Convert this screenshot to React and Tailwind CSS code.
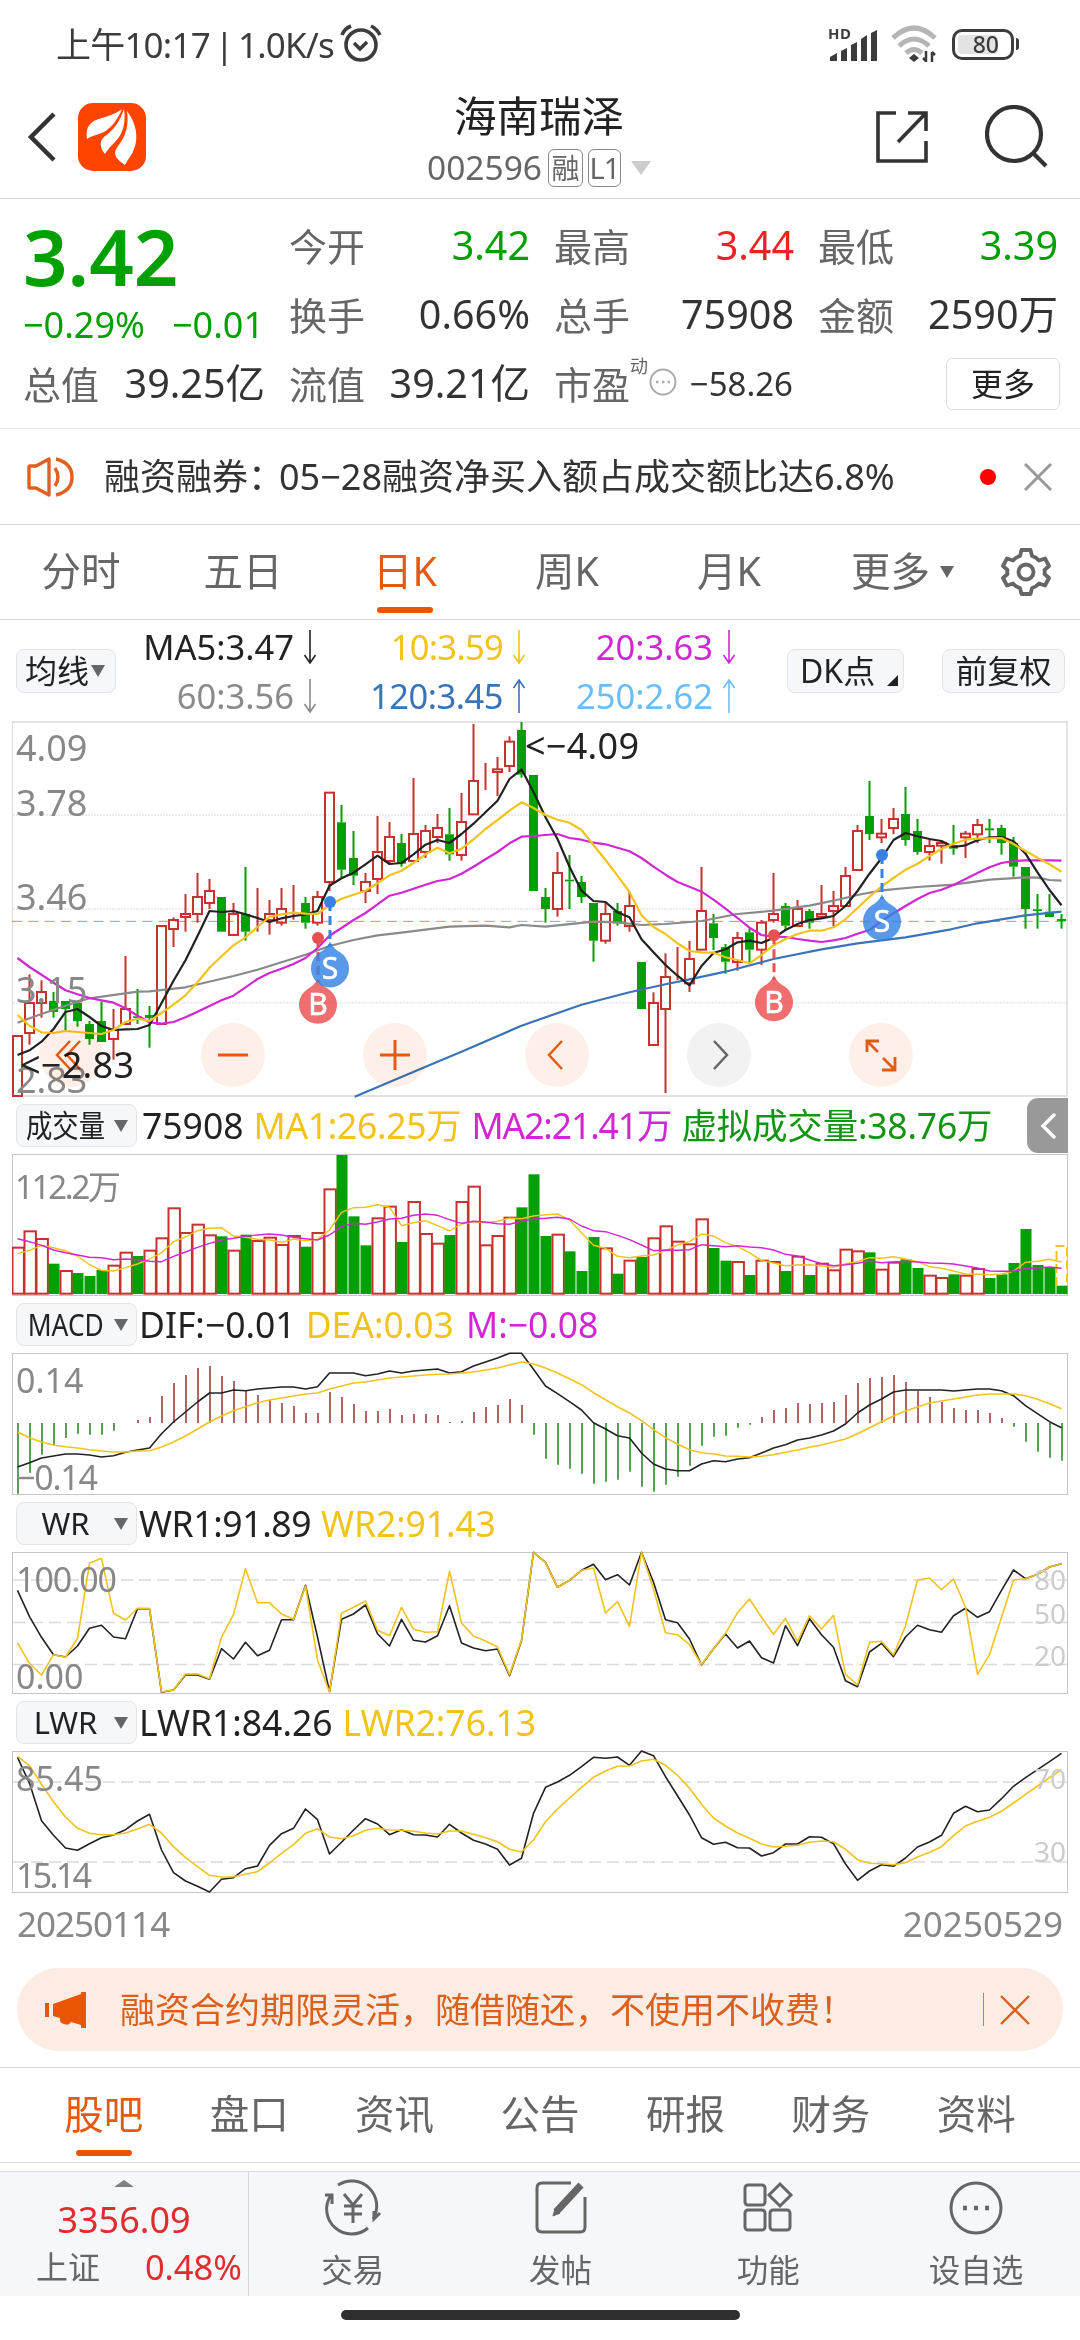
const RED = "#c8312f"
const GREEN = "#00a000"
const BLACK = "#222222"
const YELLOW = "#f2c31b"
const PURPLE = "#d226d2"

// [rising, high, body top, body bottom, low], three units per pixel
const candles = [
  [1, 978, 978, 1158, 1158], [1, 793, 879, 969, 1004], [1, 811, 846, 879, 923], [0, 846, 873, 906, 923],
  [0, 873, 873, 897, 960], [0, 873, 878, 933, 950], [0, 933, 942, 987, 1004], [0, 875, 933, 996, 996],
  [1, 897, 960, 987, 1049], [1, 738, 897, 942, 942], [0, 837, 919, 924, 942], [0, 888, 915, 924, 1013],
  [1, 648, 648, 942, 942], [1, 622, 630, 657, 711], [1, 552, 612, 621, 665], [1, 489, 561, 612, 638],
  [1, 507, 543, 579, 597], [0, 561, 561, 665, 665], [1, 579, 612, 675, 675], [0, 471, 612, 665, 692],
  [1, 534, 612, 612, 665], [1, 570, 612, 630, 674], [1, 534, 597, 638, 647], [1, 525, 588, 588, 629],
  [0, 561, 579, 638, 656], [1, 543, 561, 638, 647], [1, 248, 248, 516, 543], [0, 285, 337, 479, 505],
  [0, 363, 444, 497, 525], [1, 489, 516, 543, 579], [1, 318, 426, 507, 552], [1, 336, 381, 453, 461],
  [0, 372, 399, 461, 470], [1, 204, 372, 453, 455], [1, 345, 363, 426, 444], [1, 312, 354, 381, 399],
  [0, 294, 373, 433, 452], [1, 249, 336, 435, 452], [1, 42, 213, 313, 313], [1, 159, 195, 195, 240],
  [1, 141, 178, 186, 258], [1, 79, 95, 168, 186], [0, 36, 60, 194, 203], [0, 195, 195, 543, 543],
  [0, 534, 561, 597, 638], [1, 426, 489, 597, 620], [0, 435, 509, 514, 597], [0, 498, 516, 561, 579],
  [0, 579, 579, 692, 755], [1, 579, 612, 692, 701], [0, 579, 603, 640, 647], [1, 545, 588, 648, 665],
  [0, 756, 756, 897, 897], [1, 847, 879, 1005, 1005], [1, 730, 801, 897, 1149], [1, 711, 792, 792, 810],
  [1, 693, 747, 820, 846], [1, 471, 603, 719, 719], [0, 612, 640, 684, 720], [0, 702, 711, 755, 791],
  [1, 666, 684, 756, 782], [0, 656, 667, 719, 760], [1, 630, 638, 719, 765], [1, 489, 612, 630, 638],
  [0, 579, 588, 647, 662], [1, 570, 597, 648, 648], [0, 597, 603, 638, 656], [1, 525, 612, 620, 626],
  [1, 543, 588, 603, 648], [1, 471, 498, 588, 588], [1, 345, 363, 480, 480], [0, 213, 318, 372, 390],
  [1, 327, 371, 382, 399], [1, 294, 327, 354, 372], [0, 231, 312, 390, 407], [0, 327, 363, 426, 434],
  [1, 390, 408, 426, 452], [1, 393, 399, 407, 461], [0, 345, 405, 416, 434], [1, 363, 371, 382, 444],
  [1, 327, 345, 373, 399], [0, 327, 355, 361, 399], [0, 345, 354, 399, 434], [0, 381, 399, 470, 500],
  [0, 471, 471, 597, 656], [0, 552, 598, 603, 656], [0, 552, 605, 621, 621], [0, 612, 627, 633, 656],
]

const ma5 = [1035, 1021, 995, 957, 906, 897, 921, 948, 960, 958, 957, 945, 880, 812, 751, 678, 603, 606, 603, 613, 624, 636, 625, 618, 613, 603, 527, 505, 488, 463, 437, 462, 459, 433, 404, 390, 399, 372, 341, 307, 272, 207, 178, 246, 322, 387, 470, 542, 573, 576, 607, 622, 688, 727, 765, 797, 826, 768, 729, 718, 697, 692, 699, 684, 660, 642, 630, 625, 618, 588, 543, 491, 445, 390, 369, 379, 387, 393, 411, 406, 391, 382, 381, 394, 431, 487, 540, 586]
const ma10 = [915, 947, 967, 969, 963, 966, 969, 972, 960, 936, 926, 933, 909, 884, 856, 817, 773, 739, 706, 682, 651, 621, 613, 608, 611, 612, 585, 566, 554, 542, 520, 496, 482, 459, 433, 413, 430, 416, 388, 357, 330, 302, 277, 294, 315, 329, 338, 360, 405, 450, 497, 546, 616, 651, 672, 700, 723, 727, 728, 742, 750, 760, 735, 706, 687, 672, 662, 662, 652, 628, 594, 560, 530, 504, 479, 461, 438, 417, 401, 389, 386, 385, 384, 402, 423, 443, 463, 485]
const ma20 = [744, 771, 794, 818, 841, 853, 864, 871, 878, 895, 917, 937, 941, 936, 922, 905, 888, 871, 857, 832, 807, 789, 776, 762, 744, 714, 677, 654, 630, 609, 583, 557, 548, 536, 524, 513, 507, 491, 470, 448, 426, 400, 380, 378, 375, 372, 384, 389, 398, 403, 413, 424, 444, 470, 494, 516, 530, 545, 569, 596, 624, 653, 675, 680, 681, 687, 692, 696, 691, 684, 671, 660, 633, 610, 588, 567, 549, 539, 525, 507, 489, 472, 459, 453, 451, 451, 451, 452]
// the long averages are smooth, so they are kept as [index, value]
const ma60 = [[0, 938], [2, 912], [4, 887], [6, 865], [10, 845], [11, 844], [14, 832], [18, 798], [20, 779], [24, 734], [26, 708], [28, 690], [30, 676], [32, 668], [36, 650], [39, 647], [41, 652], [42, 645], [44, 650], [48, 635], [50, 637], [52, 645], [54, 642], [57, 633], [60, 612], [63, 602], [66, 587], [68, 572], [70, 555], [72, 541], [75, 531], [78, 524], [81, 509], [84, 502], [85, 503], [86, 510], [87, 512]]
const ma120 = [[28.1, 1160], [35, 1055], [37, 1025], [42, 947], [47, 884], [51, 847], [54, 823], [56, 808], [59, 785], [63, 747], [67, 718], [70, 700], [74, 682], [77.8, 658], [80, 640], [84, 616], [87, 605]]

const volumeTops = [473, 424, 447, 521, 543, 549, 558, 540, 527, 488, 498, 482, 445, 355, 429, 404, 436, 439, 482, 434, 453, 443, 465, 438, 470, 429, 298, 195, 379, 466, 385, 350, 456, 336, 432, 461, 435, 336, 290, 466, 438, 383, 352, 253, 438, 434, 484, 543, 441, 475, 551, 512, 501, 445, 409, 455, 463, 388, 474, 512, 516, 555, 512, 516, 543, 500, 555, 521, 541, 479, 484, 487, 539, 518, 508, 534, 557, 564, 553, 557, 537, 564, 553, 519, 417, 525, 532, 587]
const fallingVolume = [3, 5, 6, 7, 10, 17, 19, 24, 27, 28, 29, 32, 36, 42, 43, 44, 46, 47, 48, 50, 52, 58, 59, 61, 64, 66, 71, 74, 75, 78, 81, 82, 83, 84, 85, 86, 87]
const volumeMa1 = [491, 481, 466, 473, 482, 498, 524, 541, 543, 533, 522, 507, 488, 455, 441, 422, 415, 413, 438, 442, 448, 450, 457, 447, 452, 448, 420, 367, 353, 352, 344, 352, 407, 398, 392, 407, 423, 402, 395, 398, 394, 385, 386, 378, 374, 372, 390, 428, 466, 475, 499, 503, 498, 495, 482, 465, 455, 432, 438, 458, 470, 488, 512, 519, 527, 525, 524, 528, 532, 521, 515, 503, 505, 500, 507, 515, 530, 535, 543, 552, 553, 554, 552, 544, 517, 514, 508, 516]
const volumeMa2 = [446, 455, 466, 480, 488, 495, 502, 503, 509, 507, 509, 514, 515, 499, 486, 472, 460, 450, 445, 439, 435, 432, 435, 442, 446, 450, 435, 410, 400, 403, 396, 387, 385, 376, 372, 376, 389, 400, 394, 396, 401, 403, 394, 387, 385, 382, 387, 408, 422, 425, 436, 449, 465, 482, 480, 481, 479, 464, 467, 470, 467, 471, 473, 480, 493, 498, 510, 521, 527, 524, 520, 513, 518, 516, 514, 516, 519, 520, 522, 528, 534, 543, 544, 544, 536, 534, 531, 535]

const macdBars = [1211, 1148, 1094, 1066, 1044, 1031, 1034, 1034, 1022, 999, 990, 981, 918, 879, 855, 834, 828, 858, 873, 903, 915, 930, 939, 948, 969, 969, 906, 921, 942, 963, 963, 957, 975, 972, 972, 975, 996, 993, 966, 951, 945, 927, 945, 1034, 1106, 1124, 1136, 1151, 1181, 1175, 1169, 1145, 1190, 1205, 1184, 1160, 1127, 1067, 1040, 1037, 1013, 1004, 981, 960, 954, 939, 942, 939, 936, 915, 879, 864, 861, 855, 876, 903, 921, 936, 954, 960, 960, 969, 984, 1010, 1055, 1085, 1103, 1112]
const dif = [1131, 1118, 1104, 1098, 1092, 1092, 1095, 1101, 1097, 1087, 1080, 1074, 1031, 996, 966, 936, 909, 909, 900, 902, 897, 894, 891, 891, 897, 890, 849, 849, 849, 857, 852, 843, 849, 843, 840, 837, 849, 845, 828, 816, 804, 790, 790, 838, 888, 911, 935, 960, 998, 1017, 1037, 1044, 1089, 1122, 1137, 1142, 1142, 1122, 1112, 1115, 1107, 1103, 1089, 1074, 1064, 1050, 1044, 1035, 1023, 1002, 969, 945, 927, 906, 900, 900, 900, 900, 903, 900, 897, 897, 902, 917, 947, 971, 995, 1013]
const dea = [1026, 1043, 1056, 1065, 1070, 1074, 1079, 1083, 1086, 1086, 1083, 1082, 1071, 1056, 1038, 1017, 996, 978, 962, 950, 938, 930, 924, 918, 912, 909, 897, 888, 879, 876, 870, 864, 861, 858, 855, 853, 852, 849, 846, 840, 834, 825, 816, 822, 834, 849, 866, 884, 908, 929, 950, 969, 992, 1019, 1043, 1062, 1079, 1088, 1092, 1098, 1099, 1101, 1099, 1094, 1087, 1080, 1072, 1065, 1056, 1047, 1031, 1013, 995, 978, 963, 951, 939, 933, 927, 921, 915, 912, 912, 912, 917, 928, 941, 956]

const wr1 = [271, 350, 412, 464, 471, 438, 385, 376, 411, 416, 326, 326, 577, 570, 525, 525, 538, 446, 477, 427, 467, 451, 359, 359, 256, 411, 575, 358, 342, 315, 401, 438, 358, 421, 426, 407, 317, 429, 444, 452, 447, 527, 422, 157, 187, 262, 241, 211, 193, 239, 224, 255, 157, 247, 359, 368, 417, 495, 446, 402, 444, 423, 473, 489, 377, 437, 356, 404, 442, 542, 560, 456, 430, 470, 411, 376, 389, 397, 347, 325, 352, 335, 271, 210, 236, 223, 201, 191]
const wr2 = [429, 490, 525, 464, 472, 415, 190, 175, 340, 360, 325, 325, 576, 570, 522, 522, 536, 412, 343, 206, 308, 308, 342, 358, 258, 480, 577, 340, 322, 303, 391, 407, 322, 388, 397, 395, 214, 369, 408, 423, 441, 524, 420, 157, 187, 262, 241, 211, 204, 339, 305, 379, 157, 267, 398, 404, 434, 494, 446, 400, 338, 297, 352, 403, 355, 425, 347, 387, 346, 523, 555, 427, 424, 465, 377, 240, 234, 269, 237, 321, 523, 464, 352, 240, 236, 223, 201, 191]

const lwr1 = [772, 850, 962, 1006, 1044, 1051, 1031, 1013, 1005, 989, 963, 943, 1050, 1118, 1143, 1159, 1176, 1138, 1133, 1106, 1098, 1036, 1001, 985, 927, 959, 1062, 1027, 990, 956, 972, 1004, 989, 1004, 1005, 1011, 973, 999, 1021, 1032, 1048, 1095, 1075, 940, 862, 846, 826, 800, 772, 775, 771, 796, 753, 767, 830, 887, 945, 1013, 1033, 1027, 1043, 1044, 1068, 1058, 1032, 1032, 1010, 1012, 1031, 1092, 1141, 1113, 1094, 1099, 1074, 1041, 1026, 1006, 940, 919, 935, 930, 896, 859, 833, 809, 785, 760]
const lwr2 = [769, 797, 853, 905, 951, 985, 1000, 1004, 1004, 999, 987, 973, 999, 1040, 1073, 1100, 1126, 1131, 1130, 1123, 1115, 1089, 1060, 1034, 1000, 986, 1011, 1016, 1007, 991, 985, 990, 991, 994, 999, 1002, 993, 993, 1003, 1013, 1025, 1048, 1056, 1020, 965, 927, 894, 862, 832, 813, 799, 798, 783, 778, 796, 826, 865, 913, 954, 978, 999, 1015, 1032, 1041, 1039, 1036, 1027, 1023, 1025, 1048, 1079, 1090, 1091, 1094, 1088, 1071, 1057, 1040, 1007, 978, 964, 952, 934, 909, 883, 858, 833, 809]

const xAt = (i) => 17.5 + i * 12

function Line({ data, top, color, width = 1.6 }) {
  const points = data
    .map((v, i) => (Array.isArray(v) ? [xAt(v[0]), (v[1] - top) / 3] : [xAt(i), (v - top) / 3]))
    .map(([x, y]) => `${x.toFixed(1)},${y.toFixed(1)}`)
    .join(" ")
  return <polyline points={points} fill="none" stroke={color} strokeWidth={width} strokeLinejoin="round" />
}

function Label({ x = 16, y, children, ...rest }) {
  return (
    <text x={x} y={y} fontSize="34" fill="#888888" {...rest}>
      {children}
    </text>
  )
}

function Pin({ x, dotY, y, letter, color }) {
  return (
    <g>
      <line x1={x} x2={x} y1={dotY} y2={y - 22} stroke={color} strokeWidth="3" strokeDasharray="9 5" />
      <circle cx={x} cy={dotY} r="6" fill={color} />
      <path
        d={`M${x} ${y - 27} C${x + 3} ${y - 20} ${x + 7} ${y - 18} ${x + 10} ${y - 16} A19 19 0 1 1 ${x - 10} ${y - 16} C${x - 7} ${y - 18} ${x - 3} ${y - 20} ${x} ${y - 27}Z`}
        fill={color}
        opacity="0.82"
      />
      <text x={x} y={y + 10.5} fontSize="30" fill="white" stroke="white" strokeWidth="0.6" textAnchor="middle">
        {letter}
      </text>
    </g>
  )
}

function CandleChart() {
  const y = (v) => (v - 33) / 3
  return (
    <svg width="1080" height="376" className="block overflow-visible">
      {[315, 597, 878].map((v) => (
        <line key={v} x1="13" x2="1067" y1={y(v)} y2={y(v)} stroke="#ececec" strokeWidth="2" strokeDasharray="2 1" />
      ))}
      <path d="M12 1H1067V375H12" fill="none" stroke="#e2e2e2" strokeWidth="2" />
      <path d="M12.5 0V376" stroke="#dddddd" />
      <line x1="12" x2="1067" y1={y(634)} y2={y(634)} stroke="#dc8d55" strokeWidth="1" strokeDasharray="10 6.3" />
      {candles.map(([up, high, top, bottom, low], i) => {
        const x = xAt(i)
        const color = up ? RED : GREEN
        return (
          <g key={i} fill={color} stroke="none">
            {high < top && <rect x={x - 1} y={y(high)} width="2" height={(top - high) / 3} />}
            {low > bottom && <rect x={x - 1} y={y(bottom)} width="2" height={(low - bottom) / 3} />}
            {up ? (
              <rect x={x - 4.5} y={y(top)} width="9" height={(bottom - top) / 3} fill="none" stroke={color} strokeWidth="2" />
            ) : (
              <rect x={x - 4.5} y={y(top)} width="9" height={(bottom - top) / 3} />
            )}
          </g>
        )
      })}
      <Line data={ma120} top={33} color="#3a74b8" width={2.2} />
      <Line data={ma60} top={33} color="#8a8a8a" width={2.2} />
      <Line data={ma20} top={33} color={PURPLE} width={2.2} />
      <Line data={ma5} top={33} color={BLACK} width={2.2} />
      <Line data={ma10} top={33} color={YELLOW} width={2.2} />
      <Label y={y(153)} fontSize="36">4.09</Label>
      <Label y={y(318)} fontSize="36">3.78</Label>
      <Label y={y(600)} fontSize="36">3.46</Label>
      <Label y={y(878)} fontSize="36">3.15</Label>
      <Label y={y(1148)} fontSize="36">2.83</Label>
      <Label x={525} y={y(146)} fontSize="36" fill={BLACK} textLength="114">{"<−4.09"}</Label>
      <Label x={20} y={y(1103)} fontSize="36" fill={BLACK} textLength="114">{"<−2.83"}</Label>
      <Pin x={318} dotY={y(684)} y={y(884)} letter="B" color="#ec4f50" />
      <Pin x={330} dotY={y(576)} y={y(775)} letter="S" color="#3482e4" />
      <Pin x={774} dotY={y(676)} y={y(876)} letter="B" color="#ec4f50" />
      <Pin x={882} dotY={y(435)} y={y(634)} letter="S" color="#3482e4" />
    </svg>
  )
}

const controls = [
  { name: "first", d: "M31 18L18 32L31 46M41 18L28 32L41 46" },
  { name: "zoom out", d: "M17 32H47", strokeWidth: 3 },
  { name: "zoom in", d: "M17 32H47M32 17V47", strokeWidth: 3 },
  { name: "previous", d: "M37 18L24 32L37 46" },
  { name: "next", d: "M27 18L40 32L27 46", muted: true },
  { name: "expand", d: "M18 29V18H30M18 18L29 29M34 35L46 47M46 34V47H33", strokeWidth: 2.8 },
]

function ChartControls() {
  return (
    <div className="absolute left-[39px] top-[302px] flex gap-[98px] mix-blend-multiply">
      {controls.map(({ name, d, muted, strokeWidth = 2.5 }) => (
        <button
          key={name}
          aria-label={name}
          className={`size-16 rounded-full ${muted ? "bg-[#f2f2f2] text-[#666]" : "bg-[#fef0e9] text-[#e45a12]"}`}
        >
          <svg width="64" height="64" fill="none" stroke="currentColor" strokeWidth={strokeWidth}>
            <path d={d} />
          </svg>
        </button>
      ))}
    </div>
  )
}

function Frame({ guides = [], children }) {
  return (
    <svg width="1080" height="142" className="block overflow-visible">
      {guides.map((gy) => (
        <line key={gy} x1="13" x2="1067" y1={gy} y2={gy} stroke="#dadada" strokeWidth="1.4" strokeDasharray="12 6" />
      ))}
      <rect x="12.5" y="0.5" width="1055" height="141" fill="none" stroke="#c6c6c6" />
      {children}
    </svg>
  )
}

function VolumeChart() {
  const y = (v) => (v - 192) / 3
  return (
    <Frame>
      <defs>
        <clipPath id="volume">
          <rect x="12" width="1056" height="142" />
        </clipPath>
      </defs>
      <g clipPath="url(#volume)">
        {volumeTops.map((top, i) =>
          fallingVolume.includes(i) ? (
            <rect key={i} x={xAt(i) - 5} y={y(top)} width="11" height={y(612) - y(top)} fill={GREEN} />
          ) : (
            <rect key={i} x={xAt(i) - 5} y={y(top)} width="11.4" height={y(611) - y(top)} fill="white" stroke={RED} strokeWidth="2" />
          )
        )}
        <path d="M1056.5 132V92H1067V132" fill="none" stroke={YELLOW} strokeWidth="2" strokeDasharray="9 4" />
      </g>
      <Line data={volumeMa1} top={192} color={YELLOW} width={1.4} />
      <Line data={volumeMa2} top={192} color={PURPLE} width={1.4} />
      <Label y={y(326)} x={15} fontSize="33" textLength="106">112.2万</Label>
    </Frame>
  )
}

function MacdChart() {
  const y = (v) => (v - 789) / 3
  return (
    <Frame>
      {macdBars.map((v, i) => (
        <line key={i} x1={xAt(i) + 0.5} x2={xAt(i) + 0.5} y1={y(999)} y2={y(v)} stroke={v > 999 ? "#54a254" : "#b26464"} strokeWidth="2" />
      ))}
      <Line data={dif} top={789} color={BLACK} />
      <Line data={dea} top={789} color={YELLOW} />
      <Label y={y(909)}>0.14</Label>
      <Label y={y(1200)} textLength="82">−0.14</Label>
    </Frame>
  )
}

function WrChart() {
  return (
    <Frame guides={[28, 70.5, 112.5]}>
      <Line data={wr1} top={156} color={BLACK} />
      <Line data={wr2} top={156} color={YELLOW} />
      <Label y={40} textLength="101">100.00</Label>
      <Label y={137}>0.00</Label>
      <Label x={1066} y={38} fontSize="28" fill="#cccccc" textAnchor="end">80</Label>
      <Label x={1066} y={72} fontSize="28" fill="#cccccc" textAnchor="end">50</Label>
      <Label x={1066} y={114} fontSize="28" fill="#cccccc" textAnchor="end">20</Label>
    </Frame>
  )
}

function LwrChart() {
  return (
    <Frame guides={[31, 111]}>
      <Line data={lwr1} top={753} color={BLACK} />
      <Line data={lwr2} top={753} color={YELLOW} />
      <Label y={40}>85.45</Label>
      <Label y={137} textLength="76">15.14</Label>
      <Label x={1066} y={38} fontSize="28" fill="#cccccc" textAnchor="end">70</Label>
      <Label x={1066} y={111} fontSize="28" fill="#cccccc" textAnchor="end">30</Label>
    </Frame>
  )
}

function Triangle({ className = "" }) {
  return (
    <svg width="14" height="12" viewBox="0 0 14 12" className={className} fill="currentColor">
      <path d="M0 0H14L7 12Z" />
    </svg>
  )
}

function PanelHeader({ name, squeeze, side, children }) {
  return (
    <div className="flex h-[57px] items-center">
      <button className="ml-4 flex h-[43px] w-[121px] shrink-0 items-center rounded-lg border border-[#e1e4e8] bg-[#f6f7fa] text-[31px] leading-none text-[#222]">
        <span className="flex w-[97px] justify-center">
          <span className={squeeze ? "shrink-0 scale-x-[.85]" : ""}>{name}</span>
        </span>
        <Triangle className="text-[#666]" />
      </button>
      <div className="ml-[2px] flex flex-1 gap-[10px] whitespace-nowrap text-[35.5px] leading-none">{children}</div>
      {side}
    </div>
  )
}

function StatusBar() {
  return (
    <header className="flex h-[88px] items-center pl-[56px] pr-[61px] text-[35px] leading-none text-[#3c3c3c]">
      <span className="whitespace-nowrap tracking-[-0.8px] [word-spacing:-3.500px]">上午10:17 | 1.0K/s</span>
      <svg width="42" height="40" viewBox="0 0 42 40" className="ml-[6px]" fill="none" stroke="currentColor" strokeWidth="3.6">
        <circle cx="21" cy="21" r="15" />
        <path d="M14 19L20 25L27 18" />
        <path d="M2 11Q4 5 11 2M31 2Q37 5 40 11" />
      </svg>
      <div className="ml-auto flex items-center">
        <svg width="52" height="38" viewBox="0 0 52 38" className="overflow-visible" fill="currentColor">
          <text x="0" y="14" fontSize="15" fontWeight="700" textLength="23">HD</text>
          <path d="M2 36V32L9 28V36Z" />
          <path d="M13 36V26L19 23V36Z" />
          <path d="M23 36V20L29 17V36Z" />
          <path d="M33 36V14L39 10V36Z" />
          <path d="M43 36V8L49 5V36Z" />
        </svg>
        <svg width="48" height="38" viewBox="0 0 48 38" className="ml-2.5" fill="none" stroke="#b5b5b5" strokeWidth="5">
          <path d="M3 13Q24 -7 45 13M9 21Q24 7 39 21M16 28Q24 21 32 28" />
          <path d="M24 29L29 33L24 37L19 33Z" fill="#3c3c3c" stroke="none" />
          <path d="M36 26V37M36 36L33 33M42 37V27M42 27L45 30" stroke="#3c3c3c" strokeWidth="2.5" />
        </svg>
        <div className="ml-3.5 flex h-[31px] w-[62px] items-center rounded-[10px] border-[3.5px] border-[#3c3c3c] p-[3px]">
          <span className="flex h-full w-[40px] items-center justify-end rounded bg-[#e3e3e3] text-[23px] font-medium">
            <span className="-mr-px">80</span>
          </span>
        </div>
        <span className="ml-0.5 h-3 w-[3px] rounded-r bg-[#3c3c3c]" />
      </div>
    </header>
  )
}

function TitleBar() {
  return (
    <div className="flex h-[111px] items-center border-b border-[#d9d9d9] pb-3">
      <svg width="30" height="50" viewBox="0 0 30 50" className="ml-[27px]" fill="none" stroke="#333" strokeWidth="4.5">
        <path d="M27 2L4 25L27 48" />
      </svg>
      <svg width="68" height="68" viewBox="0 0 68 68" className="ml-[21px]">
        <rect width="68" height="68" rx="15" fill="#ff4400" />
        <g fill="white">
          <path d="M9 36C7 24 12 18 24 15C34 12 40 9 44 6C40 16 34 24 26 29C19 32 13 33 9 36Z" />
          <path d="M27 51C22 45 21 38 26 34C36 27 42 18 46 6C48 20 45 31 37 39C32 44 29 47 27 51Z" />
          <path d="M47 62C38 56 34 51 40 43C48 33 51 22 49 8C58 20 61 34 56 46C54 52 50 56 47 62Z" />
        </g>
      </svg>
      <div className="ml-[124px] flex w-[540px] shrink-0 -translate-x-px flex-col items-center">
        <h1 className="mt-[1px] text-[42.5px] leading-[56px] text-[#222]">海南瑞泽</h1>
        <div className="mt-1 flex h-[40px] items-center text-[33.5px] leading-none text-[#666]">
          <span>002596</span>
          <span className="ml-[6px] flex h-[38px] w-[35px] items-center justify-center rounded-md border border-[#888] text-[28px]">融</span>
          <span className="ml-[5px] flex h-[38px] w-[33px] items-center justify-center rounded-md border border-[#888] text-[29px] tracking-[-1px]">L1</span>
          <svg width="20" height="14" className="ml-[10px]" fill="#cccccc">
            <path d="M0 0H20L10 14Z" />
          </svg>
        </div>
      </div>
      <svg width="56" height="56" viewBox="0 0 56 56" className="ml-[64px] shrink-0" fill="none" stroke="#333" strokeWidth="3.6">
        <path d="M22 4H4V52H52V32M34 4H52V22M52 4L24 33" />
      </svg>
      <svg width="64" height="64" viewBox="0 0 64 64" className="ml-[55px] shrink-0" fill="none" stroke="#333" strokeWidth="4.2">
        <circle cx="29" cy="29" r="27" />
        <path d="M48 48L61 61" />
      </svg>
    </div>
  )
}

function Stat({ label, value, color = "text-[#333]" }) {
  return (
    <div className="flex items-center justify-between whitespace-nowrap">
      <span className="text-[38px] text-[#666]">{label}</span>
      <span className={`-mr-px text-[39.5px] ${color}`}>{value}</span>
    </div>
  )
}

function Quote() {
  return (
    <section className="grid h-[230px] grid-cols-[241px_240px_239px_239px] grid-rows-[69px_69px_69px] gap-x-[25px] border-b border-[#e8e8e8] pl-[23px] pt-[12px] leading-none">
      <div className="row-span-2 flex flex-col text-[#00a000]">
        <span className="mt-[6px] text-[78px] font-semibold leading-[78px]">3.42</span>
        <div className="mt-[12px] flex justify-between text-[36px] leading-[36px]">
          <span>−0.29%</span>
          <span>−0.01</span>
        </div>
      </div>
      <Stat label="今开" value="3.42" color="text-[#00a000]" />
      <Stat label="最高" value="3.44" color="text-[#ee2222]" />
      <Stat label="最低" value="3.39" color="text-[#00a000]" />
      <Stat label="换手" value="0.66%" />
      <Stat label="总手" value="75908" />
      <Stat label="金额" value="2590万" />
      <Stat label="总值" value="39.25亿" />
      <Stat label="流值" value="39.21亿" />
      <div className="flex items-center whitespace-nowrap">
        <span className="text-[38px] text-[#666]">市盈</span>
        <span className="mb-9 text-[18px] text-[#666]">动</span>
        <svg width="28" height="28" viewBox="0 0 28 28" className="mb-1 ml-px" fill="none" stroke="#aaa" strokeWidth="2">
          <circle cx="14" cy="14" r="12.5" />
          <path d="M7 14H9.500M13 14H15.500M18.500 14H21" strokeWidth="2.6" />
        </svg>
        <span className="ml-auto text-[33px] text-[#333]">−58.26</span>
      </div>
      <div className="flex items-center justify-end">
        <button className="-mr-[3px] h-[52px] w-[114px] rounded-md border border-[#dedede] text-[32px] leading-none text-[#222]">更多</button>
      </div>
    </section>
  )
}

function Notice() {
  return (
    <div className="flex h-24 items-center border-b border-[#d9d9d9] text-[#333]">
      <svg width="48" height="42" viewBox="0 0 48 42" className="ml-[27px]" fill="none" stroke="#e0611f" strokeWidth="3.4" strokeLinejoin="round">
        <path d="M3 10H9L22 3V39L9 32H3Q2 32 2 31V11Q2 10 3 10Z" />
        <path d="M28 12Q34 21 28 30M29 3Q45 7 45 21Q45 35 29 39" />
      </svg>
      <span className="ml-[29px] whitespace-nowrap text-[36px] leading-none">
        融资融券<span className="mr-[-5px]">：</span>05−28融资净买入额占成交额比达6.8%
      </span>
      <span className="ml-auto size-4 rounded-full bg-[#ff0000]" />
      <svg width="28" height="28" viewBox="0 0 28 28" className="ml-7 mr-7" fill="none" stroke="#999" strokeWidth="3">
        <path d="M1 1L27 27M27 1L1 27" />
      </svg>
    </div>
  )
}

function PeriodTabs() {
  return (
    <nav className="flex h-[95px] items-center border-b border-[#d9d9d9] text-[39.5px] leading-none text-[#666]">
      {["分时", "五日", "日K", "周K", "月K"].map((tab) => (
        <div key={tab} className={`relative flex h-full w-[162px] items-center justify-center ${tab === "日K" ? "text-[#e45a12]" : ""}`}>
          {tab}
          {tab === "日K" && <span className="absolute bottom-[6px] h-[6px] w-14 rounded-full bg-[#ea5504]" />}
        </div>
      ))}
      <span className="ml-[41px]">更多</span>
      <Triangle className="ml-[10px]" />
      <svg width="52" height="52" viewBox="0 0 52 52" className="ml-[46px]" fill="none" stroke="#666" strokeWidth="3.8" strokeLinejoin="round">
        <path d="M21.500 4H30.500L32 10Q36 11 39 14.500L45 12.500L49 20L44.500 24Q45 26 44.500 28L49 32L45 39.500L39 37.500Q36 41 32 42L30.500 48H21.500L20 42Q16 41 13 37.500L7 39.500L3 32L7.500 28Q7 26 7.500 24L3 20L7 12.500L13 14.500Q16 11 20 10Z" />
        <circle cx="26" cy="26" r="7.500" />
      </svg>
    </nav>
  )
}

function Average({ text, color, up }) {
  return (
    <div className={`flex items-center justify-end whitespace-nowrap ${color}`}>
      {text}
      <svg width="14" height="34" viewBox="0 0 14 34" className="ml-[9px]" fill="none" stroke="currentColor" strokeWidth="1.6">
        {up ? <path d="M7 34V1M1.500 9L7 1L12.500 9" /> : <path d="M7 0V33M1.500 25L7 33L12.500 25" />}
      </svg>
    </div>
  )
}

function Averages() {
  return (
    <div className="flex h-[101px] items-center">
      <button className="ml-4 flex h-11 w-[100px] items-center rounded-lg border border-[#e1e4e8] bg-[#f6f7fa] pl-[8px] text-[32px] leading-none text-[#222]">
        均线
        <Triangle className="ml-[2px] text-[#666]" />
      </button>
      <div className="grid grid-cols-[201px_209px_210px] grid-rows-[49px_49px] pt-[2px] text-[34.5px] leading-none">
        <Average text="MA5:3.47" color="text-[#222]" />
        <Average text="10:3.59" color="text-[#f2c31b] tracking-[-0.7px]" />
        <Average text="20:3.63" color="text-[#d226d2]" />
        <Average text="60:3.56" color="text-[#8a8a8a]" />
        <Average text="120:3.45" color="text-[#3a74b8] tracking-[-0.5px]" up />
        <Average text="250:2.62" color="text-[#6bbdf7]" up />
      </div>
      <button className="relative ml-[51px] h-11 w-[117px] rounded-lg border border-[#e1e4e8] bg-[#f6f7fa] pl-3 text-left text-[32px] leading-none text-[#222]">
        DK点
        <svg width="11" height="11" className="absolute bottom-[6px] right-[5px]" fill="#222">
          <path d="M11 0V11H0Z" />
        </svg>
      </button>
      <button className="ml-[38px] h-11 w-[123px] rounded-lg border border-[#e1e4e8] bg-[#f6f7fa] text-[32px] leading-none text-[#222]">前复权</button>
    </div>
  )
}

function Banner() {
  return (
    <div className="mx-[17px] flex h-[83px] items-center rounded-full bg-[#fcece3] text-[#dc5f1c]">
      <svg width="42" height="36" viewBox="0 0 42 36" className="ml-7" fill="#ea5504">
        <path d="M0 11H4V25H0ZM8 12L36 2V0H41V36H36V33L26 30Q24 34 19 32Q14 31 15 26L8 24Z" />
      </svg>
      <span className="ml-[33px] whitespace-nowrap text-[35px] leading-none">融资合约期限灵活，随借随还，不使用不收费！</span>
      <span className="ml-auto h-[33px] w-px bg-[#e0763f]" />
      <svg width="30" height="30" viewBox="0 0 30 30" className="ml-4 mr-[33px]" fill="none" stroke="currentColor" strokeWidth="2.4">
        <path d="M1 1L29 29M29 1L1 29" />
      </svg>
    </div>
  )
}

function InfoTabs() {
  return (
    <nav className="mt-4 flex h-24 items-center border-y border-[#d9d9d9] px-[31px] text-[39.5px] leading-none text-[#666]">
      {["股吧", "盘口", "资讯", "公告", "研报", "财务", "资料"].map((tab, i) => (
        <div key={tab} className={`relative flex h-full flex-1 items-center justify-center ${i === 0 ? "text-[#e45a12]" : ""}`}>
          {tab}
          {i === 0 && <span className="absolute bottom-[6px] h-[6px] w-14 rounded-full bg-[#ea5504]" />}
        </div>
      ))}
    </nav>
  )
}

const actions = [
  {
    name: "交易",
    icon: (
      <>
        <path d="M15 7A25 25 0 0 1 50 41M45 50A25 25 0 0 1 8 17M2 17H9V26M57 35L51 41V33" />
        <path d="M21 16L30 27L39 16M21 28H39M21 36H39M30 27V45" />
      </>
    ),
  },
  {
    name: "发帖",
    icon: (
      <>
        <path d="M40 5H11Q6 5 6 10V49Q6 54 11 54H49Q54 54 54 49V19" />
        <path d="M25 34L50 7" strokeWidth="7" />
        <path d="M22 38L24 31L29 35Z" fill="currentColor" strokeWidth="1" />
      </>
    ),
  },
  {
    name: "功能",
    icon: (
      <>
        <rect x="7" y="7" width="20" height="20" rx="3" />
        <rect x="7" y="32" width="20" height="20" rx="3" />
        <rect x="32" y="32" width="20" height="20" rx="3" />
        <path d="M42 6L53 17L42 28L31 17Z" />
      </>
    ),
  },
  {
    name: "设自选",
    icon: (
      <>
        <circle cx="30" cy="30" r="25" />
        <path d="M17 30H21M28 30H32M39 30H43" strokeWidth="4.500" />
      </>
    ),
  },
]

function BottomBar() {
  return (
    <footer className="mt-2 flex h-[125px] border-t border-[#d9d9d9] bg-[#f6f7fa] leading-none text-[#666]">
      <div className="flex w-[249px] flex-col items-center border-r border-[#d9d9d9] text-[#e02c2c]">
        <svg width="20" height="7" className="mt-[8px]" fill="#808080">
          <path d="M0 7L10 0L20 7Z" />
        </svg>
        <span className="mt-[15px] text-[36px]">3356.09</span>
        <div className="mt-[12px] flex w-full items-center justify-between pl-9 pr-[6px] text-[34.5px]">
          <span className="text-[32px] text-[#666]">上证</span>
          <span>0.48%</span>
        </div>
      </div>
      {actions.map(({ name, icon }) => (
        <div key={name} className="flex flex-1 flex-col items-center">
          <svg width="60" height="60" viewBox="0 0 60 60" className="mt-[6px]" fill="none" stroke="currentColor" strokeWidth="3">
            {icon}
          </svg>
          <span className="mt-4 text-[31.5px]">{name}</span>
        </div>
      ))}
    </footer>
  )
}

export default function App() {
  return (
    <div className="flex h-[2340px] w-[1080px] flex-col overflow-hidden bg-white font-['Noto_Sans','Noto_Sans_CJK_SC',sans-serif]">
      <StatusBar />
      <TitleBar />
      <Quote />
      <Notice />
      <PeriodTabs />
      <Averages />
      <div className="relative">
        <CandleChart />
        <ChartControls />
      </div>
      <PanelHeader
        name="成交量"
        squeeze
        side={
          <button aria-label="collapse" className="mr-3 flex h-[55px] w-[41px] shrink-0 items-center justify-center rounded-l-[11px] bg-[#999]">
            <svg width="16" height="26" viewBox="0 0 16 26" fill="none" stroke="white" strokeWidth="3.400" strokeLinecap="round">
              <path d="M14 2L3 13L14 24" />
            </svg>
          </button>
        }
      >
        <span className="ml-[3px] text-[#222]">75908</span>
        <span className="tracking-[-0.3px] text-[#f2c31b]">MA1:26.25万</span>
        <span className="tracking-[-1.1px] text-[#d226d2]">MA2:21.41万</span>
        <span className="tracking-[-0.2px] text-[#109610]">虚拟成交量:38.76万</span>
      </PanelHeader>
      <VolumeChart />
      <PanelHeader name="MACD" squeeze>
        <span className="text-[#222]">DIF:−0.01</span>
        <span className="text-[#f2c31b]">DEA:0.03</span>
        <span className="ml-[2px] text-[#d226d2]">M:−0.08</span>
      </PanelHeader>
      <MacdChart />
      <PanelHeader name="WR">
        <span className="tracking-[-0.4px] text-[#222]">WR1:91.89</span>
        <span className="tracking-[-0.1px] text-[#f2c31b]">WR2:91.43</span>
      </PanelHeader>
      <WrChart />
      <PanelHeader name="LWR">
        <span className="text-[#222]">LWR1:84.26</span>
        <span className="text-[#f2c31b]">LWR2:76.13</span>
      </PanelHeader>
      <LwrChart />
      <div className="flex h-[75px] items-center justify-between pb-[14px] pl-[17px] pr-[17px] text-[35px] leading-none text-[#888]">
        <span className="tracking-[-1px]">20250114</span>
        <span>20250529</span>
      </div>
      <Banner />
      <InfoTabs />
      <BottomBar />
      <div className="mx-auto mt-[14px] h-[10px] w-[399px] rounded-full bg-[#2f2f2f]" />
    </div>
  )
}
